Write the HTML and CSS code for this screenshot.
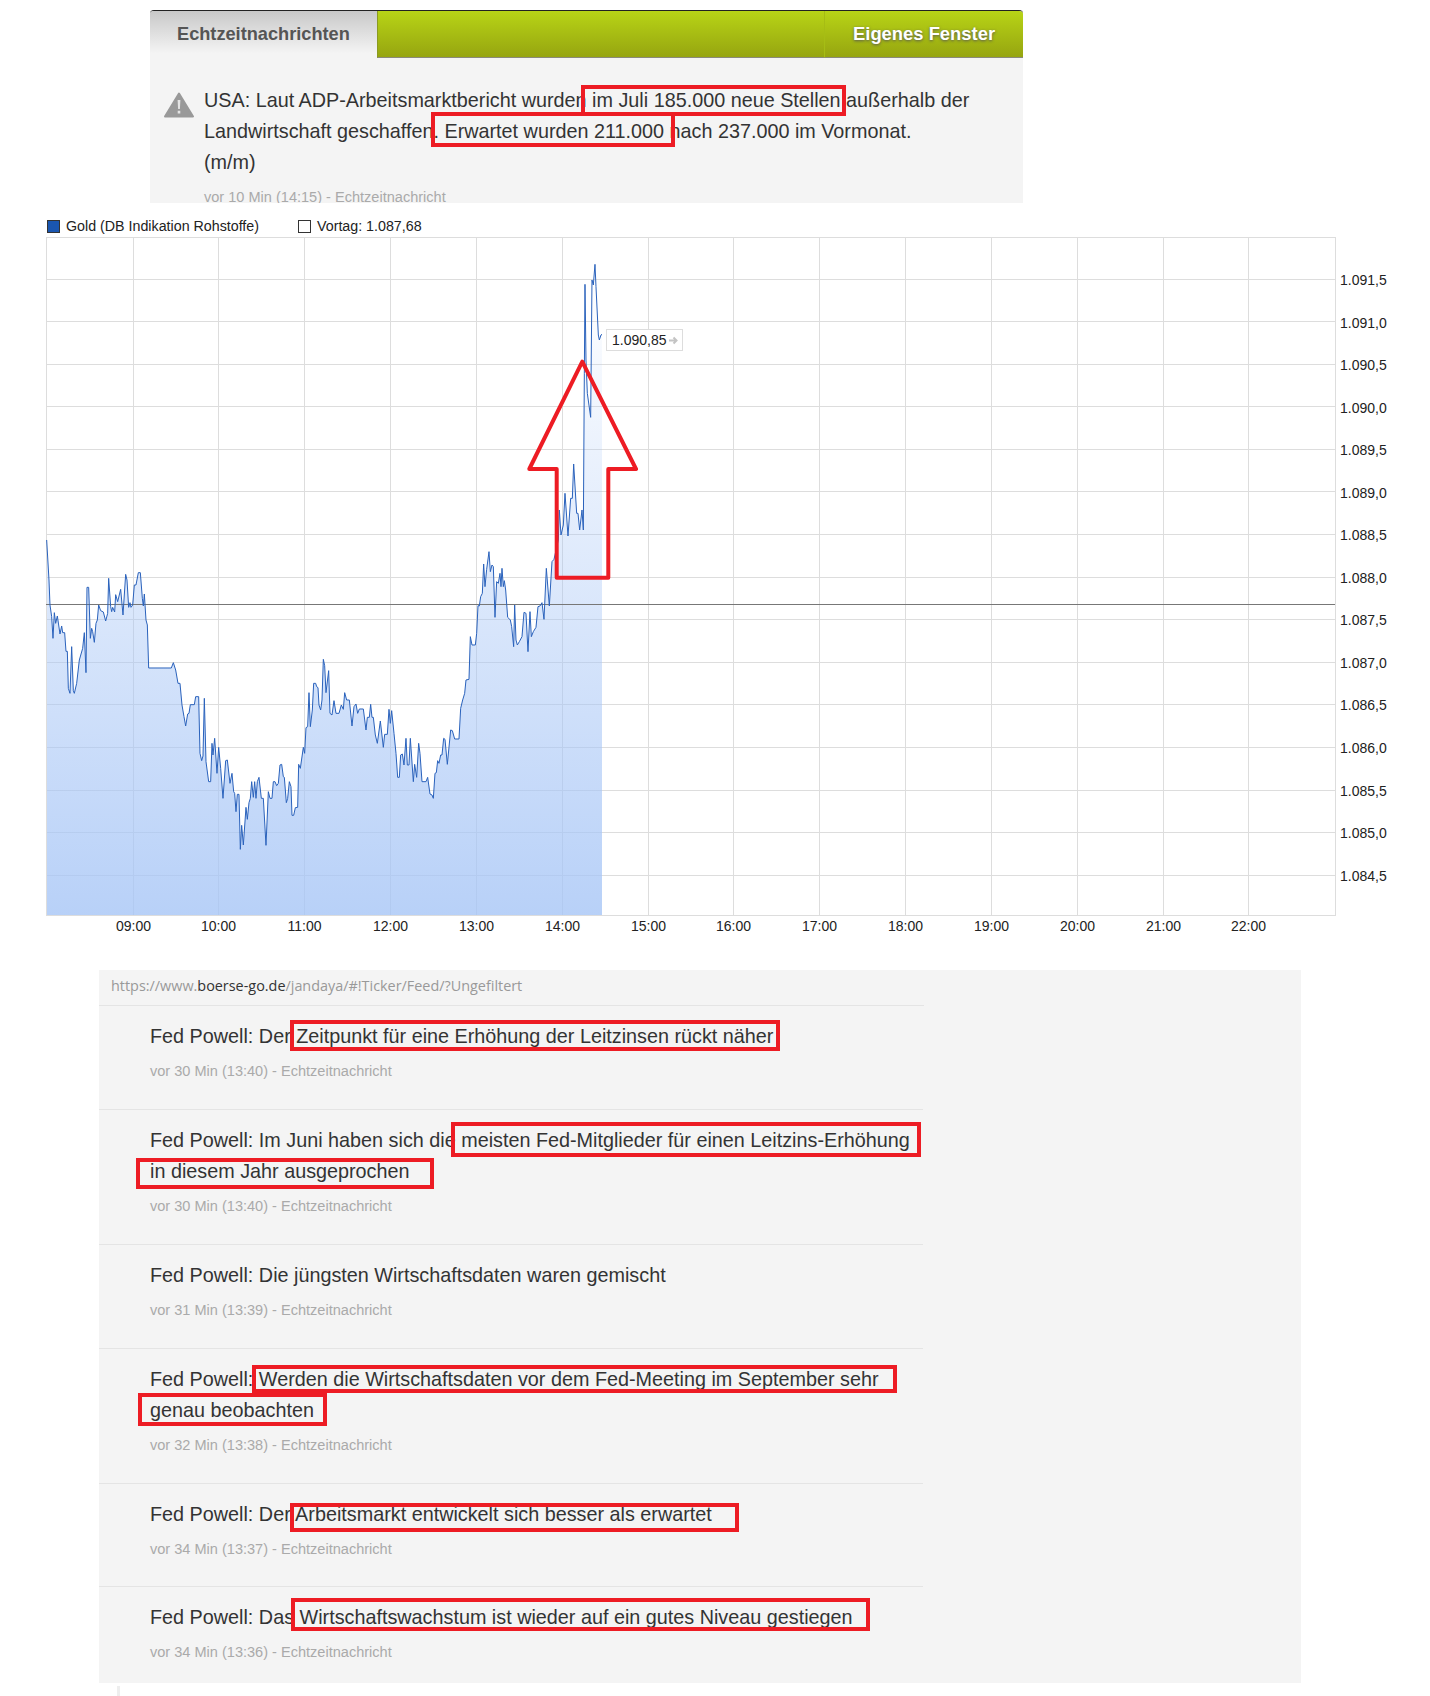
FILE: index.html
```html
<!DOCTYPE html>
<html lang="de">
<head>
<meta charset="utf-8">
<title>Echtzeitnachrichten</title>
<link rel="stylesheet" href="styles.css">
</head>
<body>
<main class="page">
  <section class="news-panel">
    <header class="tabs">
      <div class="tab-active">Echtzeitnachrichten</div>
      <div class="tab-fill"></div>
      <div class="tab-window">Eigenes Fenster</div>
    </header>
    <div class="news-body">
      <svg class="warn" viewBox="0 0 30 26" width="30" height="26" aria-hidden="true">
        <path d="M15 1.5 29 24.5H1Z" fill="#999" stroke="#999" stroke-width="2" stroke-linejoin="round"/>
        <path d="M13.6 8h2.8l-.5 9h-1.8ZM13.7 18.8h2.6v2.6h-2.6Z" fill="#e4e4e4"/>
      </svg>
      <div class="news-text">
        <p class="headline headline-wide">USA: Laut ADP-Arbeitsmarktbericht wurden im Juli 185.000 neue Stellen außerhalb der<br>Landwirtschaft geschaffen. Erwartet wurden 211.000 nach 237.000 im Vormonat.<br>(m/m)</p>
        <p class="meta">vor 10 Min (14:15) - Echtzeitnachricht</p>
      </div>
    </div>
  </section>

  <div class="legend">
    <span class="swatch swatch-gold"></span><span class="legend-gold">Gold (DB Indikation Rohstoffe)</span>
    <span class="swatch swatch-prev"></span><span>Vortag: 1.087,68</span>
  </div>

  <figure class="chart">
    <svg class="chart-svg" width="1430" height="700" viewBox="0 237 1430 700" role="img" aria-label="Gold Intraday-Chart">
      <defs>
        <linearGradient id="area" gradientUnits="userSpaceOnUse" x1="0" y1="270" x2="0" y2="916">
          <stop offset="0" stop-color="#a6c5f6" stop-opacity="0"/>
          <stop offset="1" stop-color="#a6c5f6" stop-opacity=".8"/>
        </linearGradient>
        <clipPath id="area-clip">
          <polygon transform="translate(30 520) scale(.33333)" points="50,60 57,180 60,255 65,290 69,355 73,278 77,310 82,288 90,342 95,318 98,338 104,338 108,394 112,394 115,505 120,520 125,380 130,512 133,520 140,490 148,420 158,385 163,338 168,458 171,202 176,202 181,355 185,325 188,335 193,367 198,310 202,300 206,255 212,272 220,276 227,303 233,280 236,175 242,260 245,275 248,262 254,276 257,224 263,245 272,208 279,285 287,163 291,180 296,262 300,248 303,262 308,255 313,195 318,195 325,158 331,158 337,235 340,258 343,222 348,300 352,315 356,444 424,444 430,428 437,450 444,490 450,490 456,555 462,590 467,618 473,582 477,580 481,554 493,554 497,530 506,530 510,700 515,722 519,708 523,535 528,725 536,785 542,785 546,670 549,705 554,655 561,760 566,682 572,745 579,835 587,722 592,720 600,790 606,760 611,815 614,820 618,875 622,823 627,823 631,988 635,916 640,975 648,862 652,898 657,848 661,835 665,785 670,832 674,785 678,835 682,785 687,772 694,835 700,835 708,976 715,815 720,835 726,835 730,785 735,785 740,797 745,790 750,735 755,733 760,770 763,772 769,848 773,835 778,785 783,800 786,886 791,886 796,863 803,862 806,733 811,745 820,682 824,700 828,623 833,620 837,518 841,620 847,570 851,490 857,490 860,500 864,503 867,555 872,570 876,540 880,418 884,437 888,518 888,1188 48,1188 48,60"/>
          <polygon transform="translate(320 520) scale(.33333)" points="18,518 26,452 30,580 36,585 42,542 48,580 57,580 64,555 70,568 74,518 80,540 88,540 96,618 102,560 108,552 113,580 118,567 130,567 138,630 142,592 148,592 152,553 156,592 160,592 166,645 172,670 181,603 190,682 194,643 202,643 207,568 211,610 215,572 222,640 228,700 233,772 238,772 242,705 247,702 252,735 258,655 262,735 267,735 271,655 280,785 284,733 290,772 296,670 300,700 306,785 318,785 323,772 330,822 336,825 340,835 345,760 349,758 353,722 357,730 362,705 366,705 371,655 375,658 382,733 392,630 397,632 404,657 417,657 422,565 428,540 434,520 438,480 447,478 451,350 456,375 466,375 470,340 474,257 478,258 482,230 487,220 491,132 495,200 500,148 507,95 511,155 516,135 520,140 525,292 530,185 535,190 540,160 543,200 546,145 550,200 553,182 557,210 563,292 571,300 575,320 581,380 584,255 588,360 592,375 598,365 606,350 612,277 618,280 624,395 630,275 634,350 640,335 648,322 654,260 660,258 666,248 672,298 679,145 688,258 696,125 702,118 702,1188 18,1188"/>
          <polygon transform="translate(500 240) scale(.33333)" points="162,958 175,900 178,810 183,885 190,855 195,760 204,888 212,775 217,775 221,672 230,820 234,820 239,870 246,810 250,870 253,400 255,133 258,360 262,460 272,532 276,120 280,135 285,73 288,140 295,285 298,300 303,285 306,283 306,2028 162,2028"/>
        </clipPath>
      </defs>
      <path class="grid" d="M46 279.5H1335M46 321.5H1335M46 364.5H1335M46 406.5H1335M46 449.5H1335M46 491.5H1335M46 534.5H1335M46 577.5H1335M46 619.5H1335M46 662.5H1335M46 704.5H1335M46 747.5H1335M46 790.5H1335M46 832.5H1335M46 875.5H1335M133.5 237V916M218.5 237V916M304.5 237V916M390.5 237V916M476.5 237V916M562.5 237V916M648.5 237V916M733.5 237V916M819.5 237V916M905.5 237V916M991.5 237V916M1077.5 237V916M1163.5 237V916M1248.5 237V916"/>
      <rect x="46" y="237" width="560" height="679" fill="url(#area)" clip-path="url(#area-clip)"/>
      <rect class="frame" x="46.5" y="237.5" width="1289" height="678"/>
      <path class="prev-line" d="M46 604.5H1335"/>
      <g class="trace">
        <polyline transform="translate(30 520) scale(.33333)" points="50,60 57,180 60,255 65,290 69,355 73,278 77,310 82,288 90,342 95,318 98,338 104,338 108,394 112,394 115,505 120,520 125,380 130,512 133,520 140,490 148,420 158,385 163,338 168,458 171,202 176,202 181,355 185,325 188,335 193,367 198,310 202,300 206,255 212,272 220,276 227,303 233,280 236,175 242,260 245,275 248,262 254,276 257,224 263,245 272,208 279,285 287,163 291,180 296,262 300,248 303,262 308,255 313,195 318,195 325,158 331,158 337,235 340,258 343,222 348,300 352,315 356,444 424,444 430,428 437,450 444,490 450,490 456,555 462,590 467,618 473,582 477,580 481,554 493,554 497,530 506,530 510,700 515,722 519,708 523,535 528,725 536,785 542,785 546,670 549,705 554,655 561,760 566,682 572,745 579,835 587,722 592,720 600,790 606,760 611,815 614,820 618,875 622,823 627,823 631,988 635,916 640,975 648,862 652,898 657,848 661,835 665,785 670,832 674,785 678,835 682,785 687,772 694,835 700,835 708,976 715,815 720,835 726,835 730,785 735,785 740,797 745,790 750,735 755,733 760,770 763,772 769,848 773,835 778,785 783,800 786,886 791,886 796,863 803,862 806,733 811,745 820,682 824,700 828,623 833,620 837,518 841,620 847,570 851,490 857,490 860,500 864,503 867,555 872,570 876,540 880,418 884,437 888,518"/>
        <polyline transform="translate(320 520) scale(.33333)" points="18,518 26,452 30,580 36,585 42,542 48,580 57,580 64,555 70,568 74,518 80,540 88,540 96,618 102,560 108,552 113,580 118,567 130,567 138,630 142,592 148,592 152,553 156,592 160,592 166,645 172,670 181,603 190,682 194,643 202,643 207,568 211,610 215,572 222,640 228,700 233,772 238,772 242,705 247,702 252,735 258,655 262,735 267,735 271,655 280,785 284,733 290,772 296,670 300,700 306,785 318,785 323,772 330,822 336,825 340,835 345,760 349,758 353,722 357,730 362,705 366,705 371,655 375,658 382,733 392,630 397,632 404,657 417,657 422,565 428,540 434,520 438,480 447,478 451,350 456,375 466,375 470,340 474,257 478,258 482,230 487,220 491,132 495,200 500,148 507,95 511,155 516,135 520,140 525,292 530,185 535,190 540,160 543,200 546,145 550,200 553,182 557,210 563,292 571,300 575,320 581,380 584,255 588,360 592,375 598,365 606,350 612,277 618,280 624,395 630,275 634,350 640,335 648,322 654,260 660,258 666,248 672,298 679,145 688,258 696,125 702,118"/>
        <polyline transform="translate(500 240) scale(.33333)" points="162,958 175,900 178,810 183,885 190,855 195,760 204,888 212,775 217,775 221,672 230,820 234,820 239,870 246,810 250,870 253,400 255,133 258,360 262,460 272,532 276,120 280,135 285,73 288,140 295,285 298,300 303,285 306,283"/>
      </g>
      <g class="axis-y">
        <text x="1340" y="285">1.091,5</text><text x="1340" y="328">1.091,0</text><text x="1340" y="370">1.090,5</text><text x="1340" y="413">1.090,0</text><text x="1340" y="455">1.089,5</text><text x="1340" y="498">1.089,0</text><text x="1340" y="540">1.088,5</text><text x="1340" y="583">1.088,0</text><text x="1340" y="625">1.087,5</text><text x="1340" y="668">1.087,0</text><text x="1340" y="710">1.086,5</text><text x="1340" y="753">1.086,0</text><text x="1340" y="796">1.085,5</text><text x="1340" y="838">1.085,0</text><text x="1340" y="881">1.084,5</text>
      </g>
      <g class="axis-x">
        <text x="133.5" y="931">09:00</text><text x="218.5" y="931">10:00</text><text x="304.5" y="931">11:00</text><text x="390.5" y="931">12:00</text><text x="476.5" y="931">13:00</text><text x="562.5" y="931">14:00</text><text x="648.5" y="931">15:00</text><text x="733.5" y="931">16:00</text><text x="819.5" y="931">17:00</text><text x="905.5" y="931">18:00</text><text x="991.5" y="931">19:00</text><text x="1077.5" y="931">20:00</text><text x="1163.5" y="931">21:00</text><text x="1248.5" y="931">22:00</text>
      </g>
      <g>
        <rect class="tag" x="606.5" y="329.5" width="76" height="21"/>
        <text class="tag-text" x="612" y="345">1.090,85</text>
        <path class="tag-arrow" d="M669 340.5h7M673.5 337.5l3 3-3 3"/>
      </g>
    </svg>
  </figure>

  <section class="feed">
    <div class="feed-url">https://www.<b>boerse-go.de</b>/jandaya/#!Ticker/Feed/?Ungefiltert</div>
    <article class="item">
      <p class="headline">Fed Powell: Der Zeitpunkt für eine Erhöhung der Leitzinsen rückt näher</p>
      <p class="meta">vor 30 Min (13:40) - Echtzeitnachricht</p>
    </article>
    <article class="item">
      <p class="headline">Fed Powell: Im Juni haben sich die meisten Fed-Mitglieder für einen Leitzins-Erhöhung in diesem Jahr ausgeprochen</p>
      <p class="meta">vor 30 Min (13:40) - Echtzeitnachricht</p>
    </article>
    <article class="item">
      <p class="headline">Fed Powell: Die jüngsten Wirtschaftsdaten waren gemischt</p>
      <p class="meta">vor 31 Min (13:39) - Echtzeitnachricht</p>
    </article>
    <article class="item">
      <p class="headline">Fed Powell: Werden die Wirtschaftsdaten vor dem Fed-Meeting im September sehr genau beobachten</p>
      <p class="meta">vor 32 Min (13:38) - Echtzeitnachricht</p>
    </article>
    <article class="item item-short">
      <p class="headline">Fed Powell: Der Arbeitsmarkt entwickelt sich besser als erwartet</p>
      <p class="meta">vor 34 Min (13:37) - Echtzeitnachricht</p>
    </article>
    <article class="item item-last">
      <p class="headline">Fed Powell: Das Wirtschaftswachstum ist wieder auf ein gutes Niveau gestiegen</p>
      <p class="meta">vor 34 Min (13:36) - Echtzeitnachricht</p>
    </article>
  </section>
  <div class="stub"></div>

  <div class="mark m1"></div><div class="mark m2"></div><div class="mark m3"></div>
  <div class="mark m4"></div><div class="mark m5"></div><div class="mark m6"></div>
  <div class="mark m7"></div><div class="mark m8"></div><div class="mark m9"></div>
  <svg class="big-arrow" width="120" height="230" viewBox="520 355 120 230" aria-hidden="true">
    <path d="M582.3 361.7 636 469H608.3V577.7H556.7V469H529.3Z"/>
  </svg>
</main>
</body>
</html>
```
FILE: styles.css
```css
html, body { margin: 0; padding: 0; background: #fff; }
.page { position: relative; width: 1430px; height: 1696px; overflow: hidden; font-family: "Liberation Sans", Arial, sans-serif; }
p { margin: 0; }

.news-panel { margin: 10px 0 0 150px; width: 873px; height: 193px; overflow: hidden; background: #f4f4f4; }
.tabs { display: flex; height: 48px; box-sizing: border-box; border-top: 1px solid #222; border-radius: 4px 4px 0 0; overflow: hidden; }
.tab-active { width: 227px; padding-left: 27px; box-sizing: border-box; line-height: 46px; font-size: 18.2px; font-weight: 700; color: #555; background: linear-gradient(#c8c8c8, #f4f4f4 90%); }
.tab-fill { flex: 1; background: linear-gradient(#b8d416, #96a510); border-bottom: 1px solid #8a8a7a; border-left: 1px solid #8b9a20; }
.tab-window { width: 199px; box-sizing: border-box; padding-left: 28px; line-height: 45px; font-size: 18.4px; font-weight: 700; color: #fff; text-shadow: 0 1px 3px #555; background: linear-gradient(#b8d416, #96a510); border-bottom: 1px solid #8a8a7a; border-left: 1px solid #a6bd14; }
.news-body { display: flex; padding: 27px 0 0 14px; }
.warn { flex: none; margin: 7px 10px 0 0; }
.news-text { width: 800px; }

.headline { width: 765px; font-size: 19.8px; line-height: 31px; color: #333; }
.headline-wide { width: 800px; }
.meta { font-size: 14.55px; line-height: 18px; color: #aaa; margin-top: 10px; }

.legend { display: flex; align-items: center; height: 18px; margin: 14px 0 0 47px; font-size: 14.25px; color: #222; }
.swatch { width: 11px; height: 11px; margin-right: 6px; border: 1px solid #333; }
.swatch-gold { background: #1a56b0; }
.swatch-prev { background: #fff; }
.legend-gold { width: 232px; }
.chart { margin: 2px 0 0; height: 700px; }
.chart-svg { display: block; }
.grid { fill: none; stroke: #ddd; stroke-width: 1; }
.frame { fill: none; stroke: #ddd; }
.prev-line { stroke: #777; stroke-width: 1; fill: none; }
.trace polyline { fill: none; stroke: #2a62bc; stroke-width: 1; vector-effect: non-scaling-stroke; stroke-linejoin: round; }
.axis-y text, .axis-x text, .tag-text { font-size: 14px; fill: #222; }
.axis-x text { text-anchor: middle; }
.tag { fill: #fff; stroke: #ddd; }
.tag-arrow { fill: none; stroke: #c4c4c4; stroke-width: 2; }

.feed { margin: 33px 0 0 99px; width: 1202px; height: 713px; overflow: hidden; background: #f4f4f4; }
.feed-url { width: 813px; height: 35px; padding: 0 0 0 12px; border-bottom: 1px solid #e4e4e4; font: 14.4px/31px "Open Sans", sans-serif; color: #999; }
.feed-url b { font-weight: 400; color: #333; }
.item { width: 773px; padding: 15px 0 29px 51px; border-bottom: 1px solid #e4e4e4; }
.item-short { padding-bottom: 28px; }
.item-last { border-bottom: 0; }
.stub { width: 3px; height: 10px; margin: 3px 0 0 117px; background: #eee; }

.mark { position: absolute; box-sizing: border-box; border: 4px solid #ed1c24; }
.m1 { left: 581px; top: 85px; width: 265px; height: 31px; }
.m2 { left: 431px; top: 112px; width: 244px; height: 35px; }
.m3 { left: 290px; top: 1020px; width: 490px; height: 31px; }
.m4 { left: 451px; top: 1122px; width: 470px; height: 35px; }
.m5 { left: 136px; top: 1158px; width: 298px; height: 31px; }
.m6 { left: 252px; top: 1365px; width: 645px; height: 28px; }
.m7 { left: 138px; top: 1393px; width: 189px; height: 33px; }
.m8 { left: 290px; top: 1503px; width: 449px; height: 29px; }
.m9 { left: 291px; top: 1598px; width: 579px; height: 33px; }
.big-arrow { position: absolute; left: 520px; top: 355px; }
.big-arrow path { fill: none; stroke: #ed1c24; stroke-width: 4; stroke-linejoin: round; }
```
